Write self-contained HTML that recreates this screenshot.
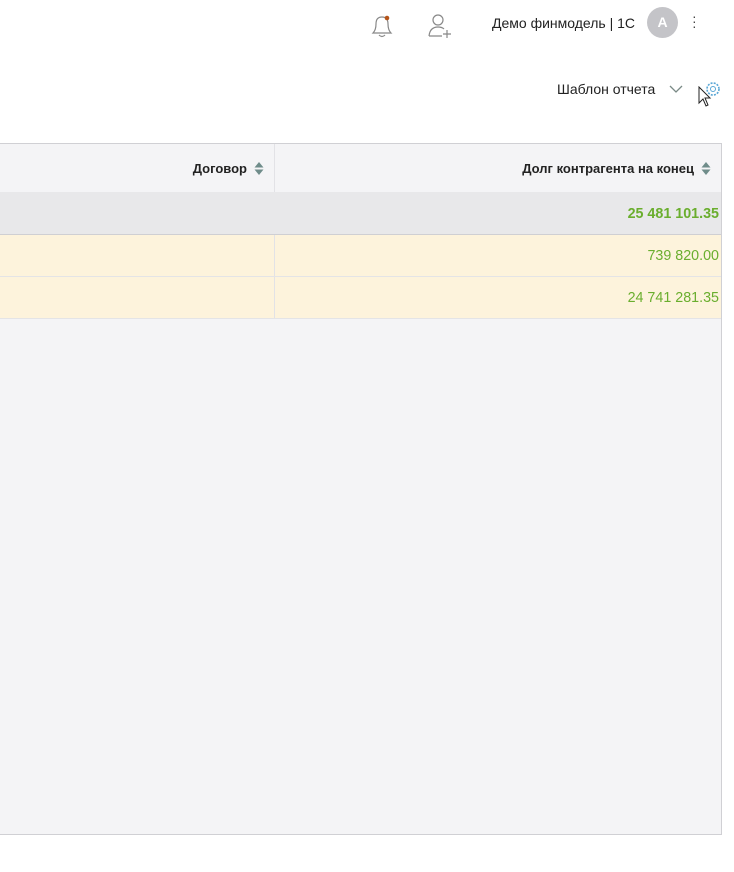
<!DOCTYPE html>
<html><head><meta charset="utf-8"><style>
body{margin:0;width:734px;height:872px;background:#fff;font-family:"Liberation Sans",sans-serif;position:relative;overflow:hidden;color:#222}
.a{position:absolute}
.tbl{left:-2px;top:143px;width:722px;height:690px;border:1px solid #d0d0d4;background:#f4f4f6}
.row{position:absolute;left:0;width:722px}
.num{position:absolute;right:2px;font-size:14.3px;color:#6aae2e}
.vd{position:absolute;left:275px;width:1px;background:#e2e2e6}
.sort{display:inline-block;width:10px;height:15px;vertical-align:middle;margin-left:7px;margin-top:-2px}
</style></head><body>
<svg class="a" style="left:369px;top:12px" width="26" height="28" viewBox="0 0 26 28"><path d="M4 21 Q7 18 7 12 Q7 5 13 5 Q19 5 19 12 Q19 18 22 21 Z M10 23 Q13 26 16 23" fill="none" stroke="#888" stroke-width="1.2"/><circle cx="18" cy="6" r="2.3" fill="#b5541a"/></svg>
<svg class="a" style="left:427px;top:13px" width="26" height="26" viewBox="0 0 26 26"><circle cx="11" cy="7" r="5" fill="none" stroke="#888" stroke-width="1.2"/><path d="M2 23 Q3 14 11 14 Q15 14 17 16 M2 23 H15 M20 17 V25 M16 21 H24" fill="none" stroke="#888" stroke-width="1.2"/></svg>
<div class="a" style="left:492px;top:15px;font-size:14px;color:#222">Демо финмодель | 1С</div>
<div class="a" style="left:647px;top:7px;width:31px;height:31px;border-radius:50%;background:#c4c4c8;color:#fff;font-size:14px;font-weight:bold;text-align:center;line-height:31px">A</div>
<div class="a" style="left:692px;top:14px;width:3px;font-size:14px;line-height:5px;color:#444">·<br>·<br>·</div>
<div class="a" style="left:557px;top:81px;font-size:14px;color:#222">Шаблон отчета</div>
<svg class="a" style="left:669px;top:84px" width="14" height="10"><path d="M1 2 L7 8 L13 2" fill="none" stroke="#7a8a86" stroke-width="1.3"/></svg>
<svg class="a" style="left:704px;top:80px" width="18" height="18" viewBox="0 0 18 18"><circle cx="9" cy="9" r="2.5" fill="none" stroke="#5aa7d6" stroke-width="1"/><circle cx="9" cy="9" r="6" fill="none" stroke="#5aa7d6" stroke-width="1.6" stroke-dasharray="2 1.2"/></svg>
<svg class="a" style="left:698px;top:86px" width="14" height="22"><path d="M1 1 L1 17 L5 13 L8 20 L10 19 L7 12 L12 12 Z" fill="#fff" stroke="#222" stroke-width="1"/></svg>
<div class="a tbl">
 <div class="row" style="top:0;height:48px;background:#f4f4f6">
  <div class="vd" style="top:0;height:48px"></div>
  <div class="a" style="right:457px;top:17px;font-size:13px;font-weight:bold">Договор<svg class="sort" viewBox="0 0 10 15"><path d="M0.5 6.5 L5 1 L9.5 6.5Z M0.5 8.5 L5 14 L9.5 8.5Z" fill="#6f8c8a"/></svg></div>
  <div class="a" style="right:10px;top:17px;font-size:13px;font-weight:bold">Долг контрагента на конец<svg class="sort" viewBox="0 0 10 15"><path d="M0.5 6.5 L5 1 L9.5 6.5Z M0.5 8.5 L5 14 L9.5 8.5Z" fill="#6f8c8a"/></svg></div>
 </div>
 <div class="row" style="top:48px;height:42px;background:#e8e8ea;border-bottom:1px solid #cfcfd3"><div class="num" style="top:14px;font-weight:bold">25 481 101.35</div></div>
 <div class="row" style="top:91px;height:41px;background:#fdf3dc;border-bottom:1px solid #e4e4e6"><div class="vd" style="top:0;height:41px"></div><div class="num" style="top:13px">739 820.00</div></div>
 <div class="row" style="top:133px;height:41px;background:#fdf3dc;border-bottom:1px solid #e4e4e6"><div class="vd" style="top:0;height:41px"></div><div class="num" style="top:13px">24 741 281.35</div></div>
</div>
</body></html>
